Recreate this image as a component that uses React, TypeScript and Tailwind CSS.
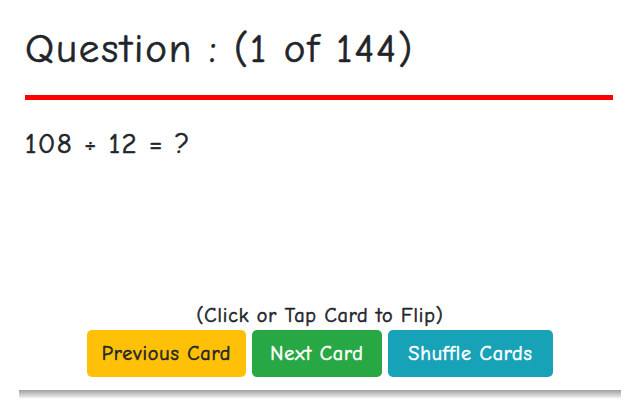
import React from "react";

export default function App() {
  const font = { fontFamily: '"Comic Sans MS", "Comic Neue", "DejaVu Sans", sans-serif' };
  return (
    <div
      className="w-[640px] h-[400px] overflow-hidden bg-white text-[#212529] tracking-[0.055em] [-webkit-text-stroke:0.6px]"
      style={font}
    >
      <div className="px-[25px] pt-[20px]">
        <h1 className="text-[41px] leading-[58px] tracking-[0.047em]">Question : (1 of 144)</h1>
        <div className="mt-[17px] h-[5px] w-[588px] bg-[#ff0000]" />
        <p className="mt-[24px] text-[29px] leading-[40px] tracking-[0.045em]">108 ÷ 12 = ?</p>
      </div>
      <div className="mt-[139px] flex flex-col items-center">
        <p className="text-[20px] leading-[26px]">(Click or Tap Card to Flip)</p>
        <div className="mt-[1px] flex gap-[6px]">
          <button className="h-[47px] w-[159px] rounded-[5px] bg-[#ffc107] text-[20px] text-[#212529]">Previous Card</button>
          <button className="h-[47px] w-[130px] rounded-[5px] bg-[#28a745] text-[20px] text-white">Next Card</button>
          <button className="h-[47px] w-[165px] rounded-[5px] bg-[#17a2b8] text-[20px] text-white">Shuffle Cards</button>
        </div>
      </div>
      <div className="mx-[19px] mt-[13px] h-[8px] w-[602px] bg-gradient-to-b from-[#a0a0a0] to-[#f0f0f0]" />
    </div>
  );
}
